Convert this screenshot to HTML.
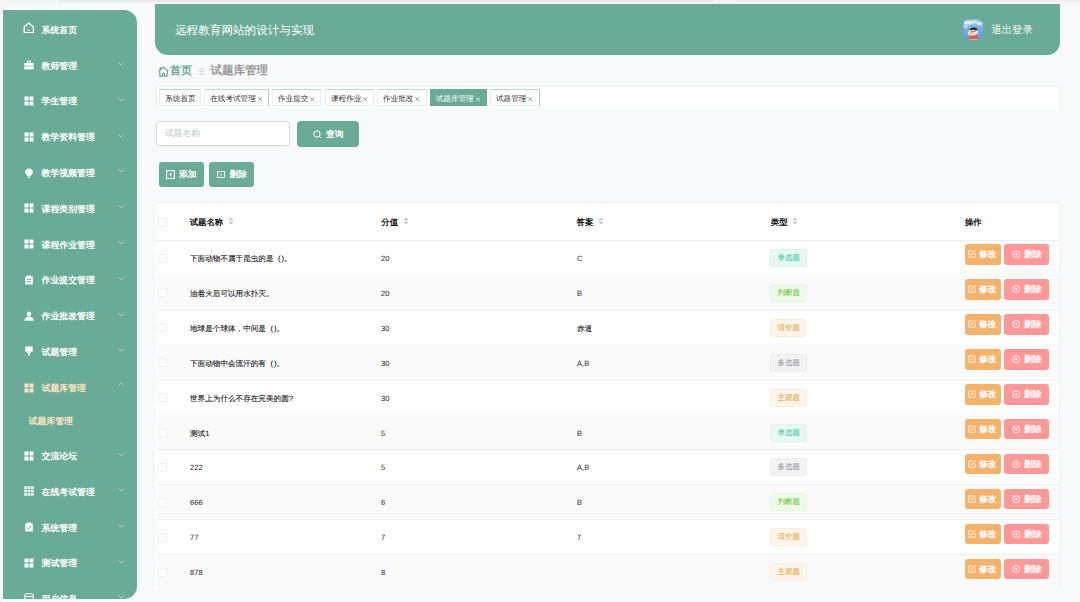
<!DOCTYPE html>
<html><head><meta charset="utf-8">
<style>
*{margin:0;padding:0;box-sizing:border-box}
html,body{width:1080px;height:602px;overflow:hidden;background:#f5f5f5;font-family:"Liberation Sans",sans-serif;text-rendering:geometricPrecision}
.t{position:absolute;white-space:nowrap}
#page{position:absolute;left:2px;top:3.6px;width:1078px;height:599px;background:#f8f9fb;border-top-left-radius:6px}
#side{position:absolute;left:2.5px;top:10px;width:134.5px;height:588.6px;background:#6aab98;border-top-right-radius:13px;border-bottom-right-radius:13px;overflow:hidden}
.mi{position:absolute;left:0;width:135px;height:20px;color:#fff;font-size:8.9px;font-weight:bold}
.mi .tx{position:absolute;left:39px;top:0.7px;line-height:20px}
.mi .ic{position:absolute;left:21px;top:5px;width:10px;height:10px}
.mi .ch{position:absolute;left:114px;top:6px;width:8px;height:5px;opacity:.6}
.act{color:#fde6c4}
#hdr{position:absolute;left:155px;top:4px;width:905px;height:51px;background:#6aab98;border-bottom-left-radius:13px;border-bottom-right-radius:13px}
</style></head><body>
<div style="position:absolute;left:57px;top:-3px;width:658px;height:4.7px;background:#e9e9e9;border-radius:0 0 4px 4px"></div><div style="position:absolute;left:734.5px;top:-3px;width:400px;height:4.7px;background:#ececec;border-radius:0 0 4px 4px"></div>
<div id="page"></div>
<div id="side"><div class="mi" style="top:9.2px"><svg class="ic" style="left:20px;top:2.8px;width:11.5px;height:11.5px" viewBox="0 0 10 10"><path d="M1 4.4 L5 0.9 L9 4.4 V9.2 H1 Z" fill="none" stroke="currentColor" stroke-width="1.15" stroke-linejoin="round"/><path d="M4 7.2 H6" stroke="currentColor" stroke-width="0.9"/></svg><span class="tx">系统首页</span></div><div class="mi" style="top:45.0px"><svg class="ic" viewBox="0 0 10 10"><rect x="3.5" y="1" width="3" height="2" fill="none" stroke="currentColor" stroke-width="0.9"/><rect x="0.3" y="3" width="9.4" height="2.8" fill="currentColor"/><rect x="0.3" y="6.4" width="9.4" height="3" fill="currentColor"/></svg><span class="tx">教师管理</span><svg class="ch" viewBox="0 0 8 5"><path d="M1 1 L4 4 L7 1" fill="none" stroke="currentColor" stroke-width="0.8"/></svg></div><div class="mi" style="top:80.8px"><svg class="ic" viewBox="0 0 10 10"><rect x="0.5" y="0.5" width="4" height="4" fill="currentColor"/><rect x="5.5" y="0.5" width="4" height="4" fill="currentColor"/><rect x="0.5" y="5.5" width="4" height="4" fill="currentColor"/><rect x="5.5" y="5.5" width="4" height="4" fill="currentColor"/></svg><span class="tx">学生管理</span><svg class="ch" viewBox="0 0 8 5"><path d="M1 1 L4 4 L7 1" fill="none" stroke="currentColor" stroke-width="0.8"/></svg></div><div class="mi" style="top:116.6px"><svg class="ic" viewBox="0 0 10 10"><rect x="0.5" y="0.5" width="4" height="4" fill="currentColor"/><rect x="5.5" y="0.5" width="4" height="4" fill="currentColor"/><rect x="0.5" y="5.5" width="4" height="4" fill="currentColor"/><rect x="5.5" y="5.5" width="4" height="4" fill="currentColor"/></svg><span class="tx">教学资料管理</span><svg class="ch" viewBox="0 0 8 5"><path d="M1 1 L4 4 L7 1" fill="none" stroke="currentColor" stroke-width="0.8"/></svg></div><div class="mi" style="top:152.4px"><svg class="ic" style="top:5.5px" viewBox="0 0 10 10"><path d="M5 0.4 C2.5 0.4 1.1 2.2 1.1 4.1 C1.1 6 2.9 7.2 3.9 8.6 H6.1 C7.1 7.2 8.9 6 8.9 4.1 C8.9 2.2 7.5 0.4 5 0.4Z" fill="currentColor"/><rect x="4" y="8.9" width="2" height="1" fill="currentColor"/></svg><span class="tx">教学视频管理</span><svg class="ch" viewBox="0 0 8 5"><path d="M1 1 L4 4 L7 1" fill="none" stroke="currentColor" stroke-width="0.8"/></svg></div><div class="mi" style="top:188.2px"><svg class="ic" viewBox="0 0 10 10"><rect x="0.5" y="0.5" width="4" height="4" fill="currentColor"/><rect x="5.5" y="0.5" width="4" height="4" fill="currentColor"/><rect x="0.5" y="5.5" width="4" height="4" fill="currentColor"/><rect x="5.5" y="5.5" width="4" height="4" fill="currentColor"/></svg><span class="tx">课程类别管理</span><svg class="ch" viewBox="0 0 8 5"><path d="M1 1 L4 4 L7 1" fill="none" stroke="currentColor" stroke-width="0.8"/></svg></div><div class="mi" style="top:224.0px"><svg class="ic" viewBox="0 0 10 10"><rect x="0.5" y="0.5" width="4" height="4" fill="currentColor"/><rect x="5.5" y="0.5" width="4" height="4" fill="currentColor"/><rect x="0.5" y="5.5" width="4" height="4" fill="currentColor"/><rect x="5.5" y="5.5" width="4" height="4" fill="currentColor"/></svg><span class="tx">课程作业管理</span><svg class="ch" viewBox="0 0 8 5"><path d="M1 1 L4 4 L7 1" fill="none" stroke="currentColor" stroke-width="0.8"/></svg></div><div class="mi" style="top:259.8px"><svg class="ic" viewBox="0 0 10 10"><path d="M1.2 1.5 H3 V0.6 H7 V1.5 H8.8 V9.6 H1.2 Z" fill="currentColor"/><rect x="3" y="4" width="4" height="0.9" fill="#6aab98"/><rect x="3" y="6" width="4" height="0.9" fill="#6aab98"/></svg><span class="tx">作业提交管理</span><svg class="ch" viewBox="0 0 8 5"><path d="M1 1 L4 4 L7 1" fill="none" stroke="currentColor" stroke-width="0.8"/></svg></div><div class="mi" style="top:295.6px"><svg class="ic" viewBox="0 0 10 10"><circle cx="5" cy="2.8" r="2.3" fill="currentColor"/><path d="M0.3 9.8 C0.6 6.8 2.4 5.6 5 5.6 C7.6 5.6 9.4 6.8 9.7 9.8 Z" fill="currentColor"/></svg><span class="tx">作业批改管理</span><svg class="ch" viewBox="0 0 8 5"><path d="M1 1 L4 4 L7 1" fill="none" stroke="currentColor" stroke-width="0.8"/></svg></div><div class="mi" style="top:331.4px"><svg class="ic" viewBox="0 0 10 10"><rect x="1.3" y="0.5" width="7.4" height="5.3" rx="0.6" fill="currentColor"/><rect x="3.2" y="5.8" width="3.6" height="1.4" fill="currentColor"/><rect x="4.3" y="7.2" width="1.4" height="2.5" fill="currentColor"/></svg><span class="tx">试题管理</span><svg class="ch" viewBox="0 0 8 5"><path d="M1 1 L4 4 L7 1" fill="none" stroke="currentColor" stroke-width="0.8"/></svg></div><div class="mi act" style="top:367.5px"><svg class="ic" viewBox="0 0 10 10"><rect x="0.5" y="0.5" width="4" height="4" fill="currentColor"/><rect x="5.5" y="0.5" width="4" height="4" fill="currentColor"/><rect x="0.5" y="5.5" width="4" height="4" fill="currentColor"/><rect x="5.5" y="5.5" width="4" height="4" fill="currentColor"/></svg><span class="tx">试题库管理</span><svg class="ch" style="top:4.5px" viewBox="0 0 8 5"><path d="M1 4 L4 1 L7 4" fill="none" stroke="currentColor" stroke-width="0.8"/></svg></div><div class="mi" style="top:435.6px"><svg class="ic" viewBox="0 0 10 10"><rect x="0.5" y="0.5" width="4" height="4" fill="currentColor"/><rect x="5.5" y="0.5" width="4" height="4" fill="currentColor"/><rect x="0.5" y="5.5" width="4" height="4" fill="currentColor"/><rect x="5.5" y="5.5" width="4" height="4" fill="currentColor"/></svg><span class="tx">交流论坛</span><svg class="ch" viewBox="0 0 8 5"><path d="M1 1 L4 4 L7 1" fill="none" stroke="currentColor" stroke-width="0.8"/></svg></div><div class="mi" style="top:471.3px"><svg class="ic" viewBox="0 0 10 10"><rect x="0.3" y="0.3" width="2.6" height="2.6" fill="currentColor"/><rect x="0.3" y="3.7" width="2.6" height="2.6" fill="currentColor"/><rect x="0.3" y="7.1" width="2.6" height="2.6" fill="currentColor"/><rect x="3.7" y="0.3" width="2.6" height="2.6" fill="currentColor"/><rect x="3.7" y="3.7" width="2.6" height="2.6" fill="currentColor"/><rect x="3.7" y="7.1" width="2.6" height="2.6" fill="currentColor"/><rect x="7.1" y="0.3" width="2.6" height="2.6" fill="currentColor"/><rect x="7.1" y="3.7" width="2.6" height="2.6" fill="currentColor"/><rect x="7.1" y="7.1" width="2.6" height="2.6" fill="currentColor"/></svg><span class="tx">在线考试管理</span><svg class="ch" viewBox="0 0 8 5"><path d="M1 1 L4 4 L7 1" fill="none" stroke="currentColor" stroke-width="0.8"/></svg></div><div class="mi" style="top:507.0px"><svg class="ic" viewBox="0 0 10 10"><path d="M1.2 1.5 H3 V0.6 H7 V1.5 H8.8 V9.6 H1.2 Z" fill="currentColor"/><path d="M2.8 5.4 L4.4 7 L7.4 3.6" fill="none" stroke="#6aab98" stroke-width="1"/></svg><span class="tx">系统管理</span><svg class="ch" viewBox="0 0 8 5"><path d="M1 1 L4 4 L7 1" fill="none" stroke="currentColor" stroke-width="0.8"/></svg></div><div class="mi" style="top:542.7px"><svg class="ic" viewBox="0 0 10 10"><rect x="0.5" y="0.5" width="4" height="4" fill="currentColor"/><rect x="5.5" y="0.5" width="4" height="4" fill="currentColor"/><rect x="0.5" y="5.5" width="4" height="4" fill="currentColor"/><rect x="5.5" y="5.5" width="4" height="4" fill="currentColor"/></svg><span class="tx">测试管理</span><svg class="ch" viewBox="0 0 8 5"><path d="M1 1 L4 4 L7 1" fill="none" stroke="currentColor" stroke-width="0.8"/></svg></div><div class="mi" style="top:578.4px"><svg class="ic" viewBox="0 0 10 10"><rect x="0.8" y="0.8" width="8.4" height="8.4" rx="0.8" fill="none" stroke="currentColor" stroke-width="1"/><path d="M0.8 3.6 H9.2 M0.8 6.4 H9.2" stroke="currentColor" stroke-width="1"/></svg><span class="tx">用户信息</span><svg class="ch" viewBox="0 0 8 5"><path d="M1 1 L4 4 L7 1" fill="none" stroke="currentColor" stroke-width="0.8"/></svg></div><div class="mi act" style="top:399.9px"><span class="tx" style="left:26px">试题库管理</span></div></div>
<div id="hdr"><span class="t" style="left:20px;top:16px;font-size:11.6px;line-height:22px;color:#fff">远程教育网站的设计与实现</span><svg style="position:absolute;left:808px;top:15px;width:20px;height:21px" viewBox="0 0 20 21">
<defs><clipPath id="av"><rect x="0" y="0" width="20" height="21" rx="5.5"/></clipPath>
<linearGradient id="sky" x1="0" y1="0" x2="0" y2="1"><stop offset="0" stop-color="#8ebdee"/><stop offset="1" stop-color="#5c9be0"/></linearGradient></defs>
<g clip-path="url(#av)">
<rect width="20" height="21" fill="url(#sky)"/>
<ellipse cx="5.5" cy="3.8" rx="4.5" ry="2" fill="#eef4fb" opacity="0.85"/>
<ellipse cx="11.5" cy="2.8" rx="3.5" ry="1.6" fill="#eef4fb" opacity="0.8"/>
<ellipse cx="16.5" cy="4.8" rx="3" ry="1.8" fill="#e8f0fa" opacity="0.85"/>
<ellipse cx="2.5" cy="7.5" rx="2.5" ry="1.4" fill="#e3edf9" opacity="0.7"/>
<g transform="translate(-1.6,0.3)"><path d="M7.5 21 L8.5 16.5 C10.5 15.5 14.5 14.8 16 16 L17.5 21Z" fill="#de5a4c"/>
<rect x="8" y="19.8" width="9" height="1.3" fill="#e4c46a"/>
<ellipse cx="11.8" cy="12.6" rx="5" ry="3.8" transform="rotate(-12 11.8 12.6)" fill="#f8dcc6"/>
<ellipse cx="8.6" cy="14.2" rx="2.4" ry="2" fill="#f8dcc6"/>
<path d="M7.8 11 C8.5 8.8 11 8 13 8.3 C15 8.6 16.3 9.8 16.4 11.2 C14 10.2 10.5 10.2 7.8 11Z" fill="#1e1e1e"/>
<ellipse cx="10.6" cy="12.4" rx="0.9" ry="0.7" fill="#333"/><ellipse cx="13.4" cy="11.8" rx="0.9" ry="0.7" fill="#333"/>
<circle cx="9.2" cy="15" r="1" fill="#f3a9a0"/>
<path d="M4.8 9 L7.5 11.5" stroke="#e07b74" stroke-width="0.7"/><circle cx="4.6" cy="8.8" r="0.6" fill="#f4e0d0"/></g>
</g></svg><span class="t" style="left:836.5px;top:20px;font-size:10.3px;line-height:14px;color:#fff">退出登录</span></div>
<svg style="position:absolute;left:157.5px;top:65.9px;width:11px;height:11px" viewBox="0 0 11 11"><path d="M0.7 5.3 L5.5 1 L10.3 5.3 M1.8 4.4 V10.2 H9.2 V4.4 M4.4 10.2 V8.2 A1.1 1.1 0 0 1 6.6 8.2 V10.2 M2.2 3.5 V1.8 H3.3 V2.6" fill="none" stroke="#6aab98" stroke-width="1.2" stroke-linejoin="round"/></svg>
<span class="t" style="left:170px;top:63px;font-size:11px;line-height:16px;color:#6aab98;font-weight:bold">首页</span>
<svg style="position:absolute;left:199px;top:68px;width:5px;height:7px" viewBox="0 0 5 7"><path d="M0 1 H5 M0 3.5 H5 M0 6 H5" stroke="#c8c8c8" stroke-width="0.8"/></svg>
<span class="t" style="left:210.5px;top:63px;font-size:11.5px;line-height:16px;color:#999;font-weight:bold">试题库管理</span>
<div style="position:absolute;left:156px;top:86px;width:904px;height:21.5px;background:#fff;border:1px solid #f0f1f3;border-left-color:#eaeaea;border-bottom:none"></div>
<div style="position:absolute;left:159.3px;top:89px;width:42.2px;height:16.5px;background:#fff;color:#333;border:1px solid #e6f0ed;border-top-color:#bcd9ce;font-size:7.6px;line-height:17px;padding-left:5px;white-space:nowrap">系统首页</div>
<div style="position:absolute;left:204.2px;top:89px;width:64.5px;height:16.5px;background:#fff;color:#333;border:1px solid #e6f0ed;border-top-color:#bcd9ce;border-right-color:#a9cfc2;font-size:7.6px;line-height:17px;padding-left:5px;white-space:nowrap">在线考试管理<svg style="display:inline-block;vertical-align:0px;margin-left:2px;width:4.5px;height:4.5px" viewBox="0 0 5 5"><path d="M0.4 0.4 L4.6 4.6 M4.6 0.4 L0.4 4.6" stroke="#777" stroke-width="0.8"/></svg></div>
<div style="position:absolute;left:272.0px;top:89px;width:49.3px;height:16.5px;background:#fff;color:#333;border:1px solid #e6f0ed;border-top-color:#bcd9ce;font-size:7.6px;line-height:17px;padding-left:5px;white-space:nowrap">作业提交<svg style="display:inline-block;vertical-align:0px;margin-left:2px;width:4.5px;height:4.5px" viewBox="0 0 5 5"><path d="M0.4 0.4 L4.6 4.6 M4.6 0.4 L0.4 4.6" stroke="#777" stroke-width="0.8"/></svg></div>
<div style="position:absolute;left:325.0px;top:89px;width:49.2px;height:16.5px;background:#fff;color:#333;border:1px solid #e6f0ed;border-top-color:#bcd9ce;font-size:7.6px;line-height:17px;padding-left:5px;white-space:nowrap">课程作业<svg style="display:inline-block;vertical-align:0px;margin-left:2px;width:4.5px;height:4.5px" viewBox="0 0 5 5"><path d="M0.4 0.4 L4.6 4.6 M4.6 0.4 L0.4 4.6" stroke="#777" stroke-width="0.8"/></svg></div>
<div style="position:absolute;left:377.0px;top:89px;width:50.0px;height:16.5px;background:#fff;color:#333;border:1px solid #e6f0ed;border-top-color:#bcd9ce;font-size:7.6px;line-height:17px;padding-left:5px;white-space:nowrap">作业批改<svg style="display:inline-block;vertical-align:0px;margin-left:2px;width:4.5px;height:4.5px" viewBox="0 0 5 5"><path d="M0.4 0.4 L4.6 4.6 M4.6 0.4 L0.4 4.6" stroke="#777" stroke-width="0.8"/></svg></div>
<div style="position:absolute;left:429.7px;top:89px;width:57.0px;height:16.5px;background:#6aab98;color:#fff;border:1px solid #6aab98;font-size:7.6px;line-height:17px;padding-left:5px;white-space:nowrap">试题库管理<svg style="display:inline-block;vertical-align:0px;margin-left:2px;width:4.5px;height:4.5px" viewBox="0 0 5 5"><path d="M0.4 0.4 L4.6 4.6 M4.6 0.4 L0.4 4.6" stroke="#fff" stroke-width="0.8"/></svg></div>
<div style="position:absolute;left:490.0px;top:89px;width:50.0px;height:16.5px;background:#fff;color:#333;border:1px solid #e6f0ed;border-top-color:#bcd9ce;border-right-color:#a9cfc2;font-size:7.6px;line-height:17px;padding-left:5px;white-space:nowrap">试题管理<svg style="display:inline-block;vertical-align:0px;margin-left:2px;width:4.5px;height:4.5px" viewBox="0 0 5 5"><path d="M0.4 0.4 L4.6 4.6 M4.6 0.4 L0.4 4.6" stroke="#777" stroke-width="0.8"/></svg></div>
<div style="position:absolute;left:156px;top:121px;width:134px;height:24.5px;background:#fff;border:1px solid #d9dadd;border-radius:3px;box-shadow:0 0.5px 1px rgba(0,0,0,.04)"></div>
<span class="t" style="left:165px;top:127px;font-size:8.8px;line-height:12px;color:#c0c4cc">试题名称</span>
<div style="position:absolute;left:296.5px;top:120.5px;width:62.7px;height:26px;background:#6aab98;border-radius:4px"></div>
<svg style="position:absolute;left:313.3px;top:129.6px;width:9px;height:9px" viewBox="0 0 9 9"><circle cx="4" cy="4" r="3.2" fill="none" stroke="#fff" stroke-width="1"/><path d="M6.3 6.3 L8 8" stroke="#fff" stroke-width="1"/></svg>
<span class="t" style="left:326px;top:127.5px;font-size:8.8px;line-height:12px;color:#fff;font-weight:bold">查询</span>
<div style="position:absolute;left:158.5px;top:162px;width:45px;height:25px;background:#6aab98;border-radius:3px"></div>
<svg style="position:absolute;left:166px;top:170px;width:9px;height:9px" viewBox="0 0 9 9"><rect x="0.6" y="0.6" width="7.8" height="7.8" fill="none" stroke="#fff" stroke-width="1.1"/><path d="M3 4.5 H6 M4.5 3 V6" stroke="#fff" stroke-width="1.1"/></svg>
<span class="t" style="left:179px;top:168px;font-size:8.8px;line-height:12px;color:#fff;font-weight:bold">添加</span>
<div style="position:absolute;left:208.5px;top:162px;width:45.5px;height:25px;background:#6aab98;border-radius:3px"></div>
<svg style="position:absolute;left:217px;top:171px;width:8px;height:7px" viewBox="0 0 8 7"><rect x="0.5" y="0.5" width="7" height="6" fill="none" stroke="#fff" stroke-width="0.9"/><path d="M2.8 2.3 L5.2 4.7 M5.2 2.3 L2.8 4.7" stroke="#fff" stroke-width="0.7"/></svg>
<span class="t" style="left:229.5px;top:168px;font-size:8.8px;line-height:12px;color:#fff;font-weight:bold">删除</span>
<div style="position:absolute;left:156px;top:202px;width:904px;height:387.5px;background:#fff;border:1px solid #eef0f5;border-left:none;border-bottom:none"></div>
<div style="position:absolute;left:156px;top:240px;width:904px;height:1px;background:#eeeeee"></div>
<div style="position:absolute;left:158px;top:217.5px;width:9px;height:9px;border:1px solid #ececec;border-radius:1.5px;background:#fff"></div>
<span class="t" style="left:189.7px;top:215.8px;font-size:8.4px;line-height:12px;color:#111;font-weight:bold">试题名称</span>
<svg style="position:absolute;left:227.5px;top:216.8px;width:6px;height:8px" viewBox="0 0 6 8"><path d="M0.3 3.2 L3 0.4 L5.7 3.2Z M0.3 4.8 L3 7.6 L5.7 4.8Z" fill="#c0c4cc"/></svg>
<span class="t" style="left:381.3px;top:215.8px;font-size:8.4px;line-height:12px;color:#111;font-weight:bold">分值</span>
<svg style="position:absolute;left:402.8px;top:216.8px;width:6px;height:8px" viewBox="0 0 6 8"><path d="M0.3 3.2 L3 0.4 L5.7 3.2Z M0.3 4.8 L3 7.6 L5.7 4.8Z" fill="#c0c4cc"/></svg>
<span class="t" style="left:576.6px;top:215.8px;font-size:8.4px;line-height:12px;color:#111;font-weight:bold">答案</span>
<svg style="position:absolute;left:597.6px;top:216.8px;width:6px;height:8px" viewBox="0 0 6 8"><path d="M0.3 3.2 L3 0.4 L5.7 3.2Z M0.3 4.8 L3 7.6 L5.7 4.8Z" fill="#c0c4cc"/></svg>
<span class="t" style="left:770.8px;top:215.8px;font-size:8.4px;line-height:12px;color:#111;font-weight:bold">类型</span>
<svg style="position:absolute;left:791.7px;top:216.8px;width:6px;height:8px" viewBox="0 0 6 8"><path d="M0.3 3.2 L3 0.4 L5.7 3.2Z M0.3 4.8 L3 7.6 L5.7 4.8Z" fill="#c0c4cc"/></svg>
<span class="t" style="left:964.9px;top:215.8px;font-size:8.4px;line-height:12px;color:#111;font-weight:bold">操作</span>
<div style="position:absolute;left:157px;top:274.9px;width:902px;height:1px;background:#f1f1f1"></div>
<div style="position:absolute;left:158px;top:253.5px;width:9px;height:9px;border:1px solid #efefef;border-radius:1.5px;background:#fff"></div>
<span class="t" style="left:190.0px;top:253.0px;font-size:7.6px;line-height:12px;color:#1c1c1c;-webkit-text-stroke:0.12px #1c1c1c">下面动物不属于昆虫的是<span style="margin-left:4.5px">(</span><span style="margin-left:1px">)</span><span style="margin-left:0px">。</span></span>
<span class="t" style="left:381.0px;top:253.0px;font-size:7.6px;line-height:12px;color:#1c1c1c">20</span>
<span class="t" style="left:577.0px;top:253.0px;font-size:7.6px;line-height:12px;color:#1c1c1c">C</span>
<div style="position:absolute;left:770.3px;top:249.0px;width:37px;height:18px;background:#e5f8f2;border:1px solid #dcf4ec;border-radius:2.5px;color:#1fbf94;font-size:7.5px;line-height:16px;text-align:center">单选题</div>
<div style="position:absolute;left:965px;top:244.4px;width:35.5px;height:20.5px;background:#f5b26b;border-radius:3px"><svg style="position:absolute;left:3px;top:6px;width:8px;height:8px" viewBox="0 0 8 8"><path d="M4.5 0.8 H0.8 V7.2 H7.2 V3.5" fill="none" stroke="#fff" stroke-width="0.8"/><path d="M3 5 L3.3 3.7 L6.6 0.5 L7.5 1.4 L4.3 4.7Z" fill="none" stroke="#fff" stroke-width="0.7"/></svg><span class="t" style="left:14px;top:4px;font-size:8.8px;line-height:12px;color:#fff;font-weight:bold">修改</span></div>
<div style="position:absolute;left:1004px;top:244.4px;width:44.5px;height:20.5px;background:#ff9999;border-radius:3px"><svg style="position:absolute;left:7.5px;top:6px;width:8.5px;height:8.5px" viewBox="0 0 9 9"><circle cx="4.5" cy="4.5" r="3.7" fill="none" stroke="#fff" stroke-width="0.9"/><circle cx="4.5" cy="4.5" r="1.2" fill="#fff"/></svg><span class="t" style="left:20px;top:4px;font-size:8.8px;line-height:12px;color:#fff;font-weight:bold">删除</span></div>
<div style="position:absolute;left:157px;top:275.4px;width:902px;height:34.9px;background:#fafafa"></div>
<div style="position:absolute;left:157px;top:309.8px;width:902px;height:1px;background:#f1f1f1"></div>
<div style="position:absolute;left:158px;top:288.4px;width:9px;height:9px;border:1px solid #efefef;border-radius:1.5px;background:#fff"></div>
<span class="t" style="left:190.0px;top:287.9px;font-size:7.6px;line-height:12px;color:#1c1c1c;-webkit-text-stroke:0.12px #1c1c1c">油着火后可以用水扑灭。</span>
<span class="t" style="left:381.0px;top:287.9px;font-size:7.6px;line-height:12px;color:#1c1c1c">20</span>
<span class="t" style="left:577.0px;top:287.9px;font-size:7.6px;line-height:12px;color:#1c1c1c">B</span>
<div style="position:absolute;left:770.3px;top:283.9px;width:37px;height:18px;background:#eff9ea;border:1px solid #e6f5de;border-radius:2.5px;color:#5cbd2c;font-size:7.5px;line-height:16px;text-align:center">判断题</div>
<div style="position:absolute;left:965px;top:279.3px;width:35.5px;height:20.5px;background:#f5b26b;border-radius:3px"><svg style="position:absolute;left:3px;top:6px;width:8px;height:8px" viewBox="0 0 8 8"><path d="M4.5 0.8 H0.8 V7.2 H7.2 V3.5" fill="none" stroke="#fff" stroke-width="0.8"/><path d="M3 5 L3.3 3.7 L6.6 0.5 L7.5 1.4 L4.3 4.7Z" fill="none" stroke="#fff" stroke-width="0.7"/></svg><span class="t" style="left:14px;top:4px;font-size:8.8px;line-height:12px;color:#fff;font-weight:bold">修改</span></div>
<div style="position:absolute;left:1004px;top:279.3px;width:44.5px;height:20.5px;background:#ff9999;border-radius:3px"><svg style="position:absolute;left:7.5px;top:6px;width:8.5px;height:8.5px" viewBox="0 0 9 9"><circle cx="4.5" cy="4.5" r="3.7" fill="none" stroke="#fff" stroke-width="0.9"/><circle cx="4.5" cy="4.5" r="1.2" fill="#fff"/></svg><span class="t" style="left:20px;top:4px;font-size:8.8px;line-height:12px;color:#fff;font-weight:bold">删除</span></div>
<div style="position:absolute;left:157px;top:344.7px;width:902px;height:1px;background:#f1f1f1"></div>
<div style="position:absolute;left:158px;top:323.3px;width:9px;height:9px;border:1px solid #efefef;border-radius:1.5px;background:#fff"></div>
<span class="t" style="left:190.0px;top:322.8px;font-size:7.6px;line-height:12px;color:#1c1c1c;-webkit-text-stroke:0.12px #1c1c1c">地球是个球体，中间是<span style="margin-left:4.5px">(</span><span style="margin-left:1px">)</span><span style="margin-left:0px">。</span></span>
<span class="t" style="left:381.0px;top:322.8px;font-size:7.6px;line-height:12px;color:#1c1c1c">30</span>
<span class="t" style="left:577.0px;top:322.8px;font-size:7.6px;line-height:12px;color:#1c1c1c;-webkit-text-stroke:0.12px #1c1c1c">赤道</span>
<div style="position:absolute;left:770.3px;top:318.8px;width:37px;height:18px;background:#fdf5ea;border:1px solid #fbeedd;border-radius:2.5px;color:#e39a2c;font-size:7.5px;line-height:16px;text-align:center">填空题</div>
<div style="position:absolute;left:965px;top:314.2px;width:35.5px;height:20.5px;background:#f5b26b;border-radius:3px"><svg style="position:absolute;left:3px;top:6px;width:8px;height:8px" viewBox="0 0 8 8"><path d="M4.5 0.8 H0.8 V7.2 H7.2 V3.5" fill="none" stroke="#fff" stroke-width="0.8"/><path d="M3 5 L3.3 3.7 L6.6 0.5 L7.5 1.4 L4.3 4.7Z" fill="none" stroke="#fff" stroke-width="0.7"/></svg><span class="t" style="left:14px;top:4px;font-size:8.8px;line-height:12px;color:#fff;font-weight:bold">修改</span></div>
<div style="position:absolute;left:1004px;top:314.2px;width:44.5px;height:20.5px;background:#ff9999;border-radius:3px"><svg style="position:absolute;left:7.5px;top:6px;width:8.5px;height:8.5px" viewBox="0 0 9 9"><circle cx="4.5" cy="4.5" r="3.7" fill="none" stroke="#fff" stroke-width="0.9"/><circle cx="4.5" cy="4.5" r="1.2" fill="#fff"/></svg><span class="t" style="left:20px;top:4px;font-size:8.8px;line-height:12px;color:#fff;font-weight:bold">删除</span></div>
<div style="position:absolute;left:157px;top:345.2px;width:902px;height:34.9px;background:#fafafa"></div>
<div style="position:absolute;left:157px;top:379.6px;width:902px;height:1px;background:#f1f1f1"></div>
<div style="position:absolute;left:158px;top:358.2px;width:9px;height:9px;border:1px solid #efefef;border-radius:1.5px;background:#fff"></div>
<span class="t" style="left:190.0px;top:357.7px;font-size:7.6px;line-height:12px;color:#1c1c1c;-webkit-text-stroke:0.12px #1c1c1c">下面动物中会流汗的有<span style="margin-left:4.5px">(</span><span style="margin-left:1px">)</span><span style="margin-left:0px">。</span></span>
<span class="t" style="left:381.0px;top:357.7px;font-size:7.6px;line-height:12px;color:#1c1c1c">30</span>
<span class="t" style="left:577.0px;top:357.7px;font-size:7.6px;line-height:12px;color:#1c1c1c">A,B</span>
<div style="position:absolute;left:770.3px;top:353.7px;width:37px;height:18px;background:#f3f3f4;border:1px solid #ececee;border-radius:2.5px;color:#86898f;font-size:7.5px;line-height:16px;text-align:center">多选题</div>
<div style="position:absolute;left:965px;top:349.1px;width:35.5px;height:20.5px;background:#f5b26b;border-radius:3px"><svg style="position:absolute;left:3px;top:6px;width:8px;height:8px" viewBox="0 0 8 8"><path d="M4.5 0.8 H0.8 V7.2 H7.2 V3.5" fill="none" stroke="#fff" stroke-width="0.8"/><path d="M3 5 L3.3 3.7 L6.6 0.5 L7.5 1.4 L4.3 4.7Z" fill="none" stroke="#fff" stroke-width="0.7"/></svg><span class="t" style="left:14px;top:4px;font-size:8.8px;line-height:12px;color:#fff;font-weight:bold">修改</span></div>
<div style="position:absolute;left:1004px;top:349.1px;width:44.5px;height:20.5px;background:#ff9999;border-radius:3px"><svg style="position:absolute;left:7.5px;top:6px;width:8.5px;height:8.5px" viewBox="0 0 9 9"><circle cx="4.5" cy="4.5" r="3.7" fill="none" stroke="#fff" stroke-width="0.9"/><circle cx="4.5" cy="4.5" r="1.2" fill="#fff"/></svg><span class="t" style="left:20px;top:4px;font-size:8.8px;line-height:12px;color:#fff;font-weight:bold">删除</span></div>
<div style="position:absolute;left:157px;top:414.5px;width:902px;height:1px;background:#f1f1f1"></div>
<div style="position:absolute;left:158px;top:393.1px;width:9px;height:9px;border:1px solid #efefef;border-radius:1.5px;background:#fff"></div>
<span class="t" style="left:190.0px;top:392.6px;font-size:7.6px;line-height:12px;color:#1c1c1c;-webkit-text-stroke:0.12px #1c1c1c">世界上为什么不存在完美的圆?</span>
<span class="t" style="left:381.0px;top:392.6px;font-size:7.6px;line-height:12px;color:#1c1c1c">30</span>
<span class="t" style="left:577.0px;top:392.6px;font-size:7.6px;line-height:12px;color:#1c1c1c"></span>
<div style="position:absolute;left:770.3px;top:388.6px;width:37px;height:18px;background:#fdf5ea;border:1px solid #fbeedd;border-radius:2.5px;color:#e39a2c;font-size:7.5px;line-height:16px;text-align:center">主观题</div>
<div style="position:absolute;left:965px;top:384.0px;width:35.5px;height:20.5px;background:#f5b26b;border-radius:3px"><svg style="position:absolute;left:3px;top:6px;width:8px;height:8px" viewBox="0 0 8 8"><path d="M4.5 0.8 H0.8 V7.2 H7.2 V3.5" fill="none" stroke="#fff" stroke-width="0.8"/><path d="M3 5 L3.3 3.7 L6.6 0.5 L7.5 1.4 L4.3 4.7Z" fill="none" stroke="#fff" stroke-width="0.7"/></svg><span class="t" style="left:14px;top:4px;font-size:8.8px;line-height:12px;color:#fff;font-weight:bold">修改</span></div>
<div style="position:absolute;left:1004px;top:384.0px;width:44.5px;height:20.5px;background:#ff9999;border-radius:3px"><svg style="position:absolute;left:7.5px;top:6px;width:8.5px;height:8.5px" viewBox="0 0 9 9"><circle cx="4.5" cy="4.5" r="3.7" fill="none" stroke="#fff" stroke-width="0.9"/><circle cx="4.5" cy="4.5" r="1.2" fill="#fff"/></svg><span class="t" style="left:20px;top:4px;font-size:8.8px;line-height:12px;color:#fff;font-weight:bold">删除</span></div>
<div style="position:absolute;left:157px;top:415.0px;width:902px;height:34.9px;background:#fafafa"></div>
<div style="position:absolute;left:157px;top:449.4px;width:902px;height:1px;background:#f1f1f1"></div>
<div style="position:absolute;left:158px;top:428.0px;width:9px;height:9px;border:1px solid #efefef;border-radius:1.5px;background:#fff"></div>
<span class="t" style="left:190.0px;top:427.5px;font-size:7.6px;line-height:12px;color:#1c1c1c;-webkit-text-stroke:0.12px #1c1c1c">测试1</span>
<span class="t" style="left:381.0px;top:427.5px;font-size:7.6px;line-height:12px;color:#1c1c1c">5</span>
<span class="t" style="left:577.0px;top:427.5px;font-size:7.6px;line-height:12px;color:#1c1c1c">B</span>
<div style="position:absolute;left:770.3px;top:423.5px;width:37px;height:18px;background:#e5f8f2;border:1px solid #dcf4ec;border-radius:2.5px;color:#1fbf94;font-size:7.5px;line-height:16px;text-align:center">单选题</div>
<div style="position:absolute;left:965px;top:418.9px;width:35.5px;height:20.5px;background:#f5b26b;border-radius:3px"><svg style="position:absolute;left:3px;top:6px;width:8px;height:8px" viewBox="0 0 8 8"><path d="M4.5 0.8 H0.8 V7.2 H7.2 V3.5" fill="none" stroke="#fff" stroke-width="0.8"/><path d="M3 5 L3.3 3.7 L6.6 0.5 L7.5 1.4 L4.3 4.7Z" fill="none" stroke="#fff" stroke-width="0.7"/></svg><span class="t" style="left:14px;top:4px;font-size:8.8px;line-height:12px;color:#fff;font-weight:bold">修改</span></div>
<div style="position:absolute;left:1004px;top:418.9px;width:44.5px;height:20.5px;background:#ff9999;border-radius:3px"><svg style="position:absolute;left:7.5px;top:6px;width:8.5px;height:8.5px" viewBox="0 0 9 9"><circle cx="4.5" cy="4.5" r="3.7" fill="none" stroke="#fff" stroke-width="0.9"/><circle cx="4.5" cy="4.5" r="1.2" fill="#fff"/></svg><span class="t" style="left:20px;top:4px;font-size:8.8px;line-height:12px;color:#fff;font-weight:bold">删除</span></div>
<div style="position:absolute;left:157px;top:484.3px;width:902px;height:1px;background:#f1f1f1"></div>
<div style="position:absolute;left:158px;top:462.9px;width:9px;height:9px;border:1px solid #efefef;border-radius:1.5px;background:#fff"></div>
<span class="t" style="left:190.0px;top:462.4px;font-size:7.6px;line-height:12px;color:#1c1c1c">222</span>
<span class="t" style="left:381.0px;top:462.4px;font-size:7.6px;line-height:12px;color:#1c1c1c">5</span>
<span class="t" style="left:577.0px;top:462.4px;font-size:7.6px;line-height:12px;color:#1c1c1c">A,B</span>
<div style="position:absolute;left:770.3px;top:458.4px;width:37px;height:18px;background:#f3f3f4;border:1px solid #ececee;border-radius:2.5px;color:#86898f;font-size:7.5px;line-height:16px;text-align:center">多选题</div>
<div style="position:absolute;left:965px;top:453.8px;width:35.5px;height:20.5px;background:#f5b26b;border-radius:3px"><svg style="position:absolute;left:3px;top:6px;width:8px;height:8px" viewBox="0 0 8 8"><path d="M4.5 0.8 H0.8 V7.2 H7.2 V3.5" fill="none" stroke="#fff" stroke-width="0.8"/><path d="M3 5 L3.3 3.7 L6.6 0.5 L7.5 1.4 L4.3 4.7Z" fill="none" stroke="#fff" stroke-width="0.7"/></svg><span class="t" style="left:14px;top:4px;font-size:8.8px;line-height:12px;color:#fff;font-weight:bold">修改</span></div>
<div style="position:absolute;left:1004px;top:453.8px;width:44.5px;height:20.5px;background:#ff9999;border-radius:3px"><svg style="position:absolute;left:7.5px;top:6px;width:8.5px;height:8.5px" viewBox="0 0 9 9"><circle cx="4.5" cy="4.5" r="3.7" fill="none" stroke="#fff" stroke-width="0.9"/><circle cx="4.5" cy="4.5" r="1.2" fill="#fff"/></svg><span class="t" style="left:20px;top:4px;font-size:8.8px;line-height:12px;color:#fff;font-weight:bold">删除</span></div>
<div style="position:absolute;left:157px;top:484.8px;width:902px;height:34.9px;background:#fafafa"></div>
<div style="position:absolute;left:157px;top:519.2px;width:902px;height:1px;background:#f1f1f1"></div>
<div style="position:absolute;left:158px;top:497.8px;width:9px;height:9px;border:1px solid #efefef;border-radius:1.5px;background:#fff"></div>
<span class="t" style="left:190.0px;top:497.3px;font-size:7.6px;line-height:12px;color:#1c1c1c">666</span>
<span class="t" style="left:381.0px;top:497.3px;font-size:7.6px;line-height:12px;color:#1c1c1c">6</span>
<span class="t" style="left:577.0px;top:497.3px;font-size:7.6px;line-height:12px;color:#1c1c1c">B</span>
<div style="position:absolute;left:770.3px;top:493.3px;width:37px;height:18px;background:#eff9ea;border:1px solid #e6f5de;border-radius:2.5px;color:#5cbd2c;font-size:7.5px;line-height:16px;text-align:center">判断题</div>
<div style="position:absolute;left:965px;top:488.7px;width:35.5px;height:20.5px;background:#f5b26b;border-radius:3px"><svg style="position:absolute;left:3px;top:6px;width:8px;height:8px" viewBox="0 0 8 8"><path d="M4.5 0.8 H0.8 V7.2 H7.2 V3.5" fill="none" stroke="#fff" stroke-width="0.8"/><path d="M3 5 L3.3 3.7 L6.6 0.5 L7.5 1.4 L4.3 4.7Z" fill="none" stroke="#fff" stroke-width="0.7"/></svg><span class="t" style="left:14px;top:4px;font-size:8.8px;line-height:12px;color:#fff;font-weight:bold">修改</span></div>
<div style="position:absolute;left:1004px;top:488.7px;width:44.5px;height:20.5px;background:#ff9999;border-radius:3px"><svg style="position:absolute;left:7.5px;top:6px;width:8.5px;height:8.5px" viewBox="0 0 9 9"><circle cx="4.5" cy="4.5" r="3.7" fill="none" stroke="#fff" stroke-width="0.9"/><circle cx="4.5" cy="4.5" r="1.2" fill="#fff"/></svg><span class="t" style="left:20px;top:4px;font-size:8.8px;line-height:12px;color:#fff;font-weight:bold">删除</span></div>
<div style="position:absolute;left:157px;top:554.1px;width:902px;height:1px;background:#f1f1f1"></div>
<div style="position:absolute;left:158px;top:532.7px;width:9px;height:9px;border:1px solid #efefef;border-radius:1.5px;background:#fff"></div>
<span class="t" style="left:190.0px;top:532.2px;font-size:7.6px;line-height:12px;color:#1c1c1c">77</span>
<span class="t" style="left:381.0px;top:532.2px;font-size:7.6px;line-height:12px;color:#1c1c1c">7</span>
<span class="t" style="left:577.0px;top:532.2px;font-size:7.6px;line-height:12px;color:#1c1c1c">7</span>
<div style="position:absolute;left:770.3px;top:528.2px;width:37px;height:18px;background:#fdf5ea;border:1px solid #fbeedd;border-radius:2.5px;color:#e39a2c;font-size:7.5px;line-height:16px;text-align:center">填空题</div>
<div style="position:absolute;left:965px;top:523.6px;width:35.5px;height:20.5px;background:#f5b26b;border-radius:3px"><svg style="position:absolute;left:3px;top:6px;width:8px;height:8px" viewBox="0 0 8 8"><path d="M4.5 0.8 H0.8 V7.2 H7.2 V3.5" fill="none" stroke="#fff" stroke-width="0.8"/><path d="M3 5 L3.3 3.7 L6.6 0.5 L7.5 1.4 L4.3 4.7Z" fill="none" stroke="#fff" stroke-width="0.7"/></svg><span class="t" style="left:14px;top:4px;font-size:8.8px;line-height:12px;color:#fff;font-weight:bold">修改</span></div>
<div style="position:absolute;left:1004px;top:523.6px;width:44.5px;height:20.5px;background:#ff9999;border-radius:3px"><svg style="position:absolute;left:7.5px;top:6px;width:8.5px;height:8.5px" viewBox="0 0 9 9"><circle cx="4.5" cy="4.5" r="3.7" fill="none" stroke="#fff" stroke-width="0.9"/><circle cx="4.5" cy="4.5" r="1.2" fill="#fff"/></svg><span class="t" style="left:20px;top:4px;font-size:8.8px;line-height:12px;color:#fff;font-weight:bold">删除</span></div>
<div style="position:absolute;left:157px;top:554.6px;width:902px;height:34.9px;background:#fafafa"></div>
<div style="position:absolute;left:158px;top:567.6px;width:9px;height:9px;border:1px solid #efefef;border-radius:1.5px;background:#fff"></div>
<span class="t" style="left:190.0px;top:567.1px;font-size:7.6px;line-height:12px;color:#1c1c1c">878</span>
<span class="t" style="left:381.0px;top:567.1px;font-size:7.6px;line-height:12px;color:#1c1c1c">8</span>
<span class="t" style="left:577.0px;top:567.1px;font-size:7.6px;line-height:12px;color:#1c1c1c"></span>
<div style="position:absolute;left:770.3px;top:563.1px;width:37px;height:18px;background:#fdf5ea;border:1px solid #fbeedd;border-radius:2.5px;color:#e39a2c;font-size:7.5px;line-height:16px;text-align:center">主观题</div>
<div style="position:absolute;left:965px;top:558.5px;width:35.5px;height:20.5px;background:#f5b26b;border-radius:3px"><svg style="position:absolute;left:3px;top:6px;width:8px;height:8px" viewBox="0 0 8 8"><path d="M4.5 0.8 H0.8 V7.2 H7.2 V3.5" fill="none" stroke="#fff" stroke-width="0.8"/><path d="M3 5 L3.3 3.7 L6.6 0.5 L7.5 1.4 L4.3 4.7Z" fill="none" stroke="#fff" stroke-width="0.7"/></svg><span class="t" style="left:14px;top:4px;font-size:8.8px;line-height:12px;color:#fff;font-weight:bold">修改</span></div>
<div style="position:absolute;left:1004px;top:558.5px;width:44.5px;height:20.5px;background:#ff9999;border-radius:3px"><svg style="position:absolute;left:7.5px;top:6px;width:8.5px;height:8.5px" viewBox="0 0 9 9"><circle cx="4.5" cy="4.5" r="3.7" fill="none" stroke="#fff" stroke-width="0.9"/><circle cx="4.5" cy="4.5" r="1.2" fill="#fff"/></svg><span class="t" style="left:20px;top:4px;font-size:8.8px;line-height:12px;color:#fff;font-weight:bold">删除</span></div>
</body></html>
